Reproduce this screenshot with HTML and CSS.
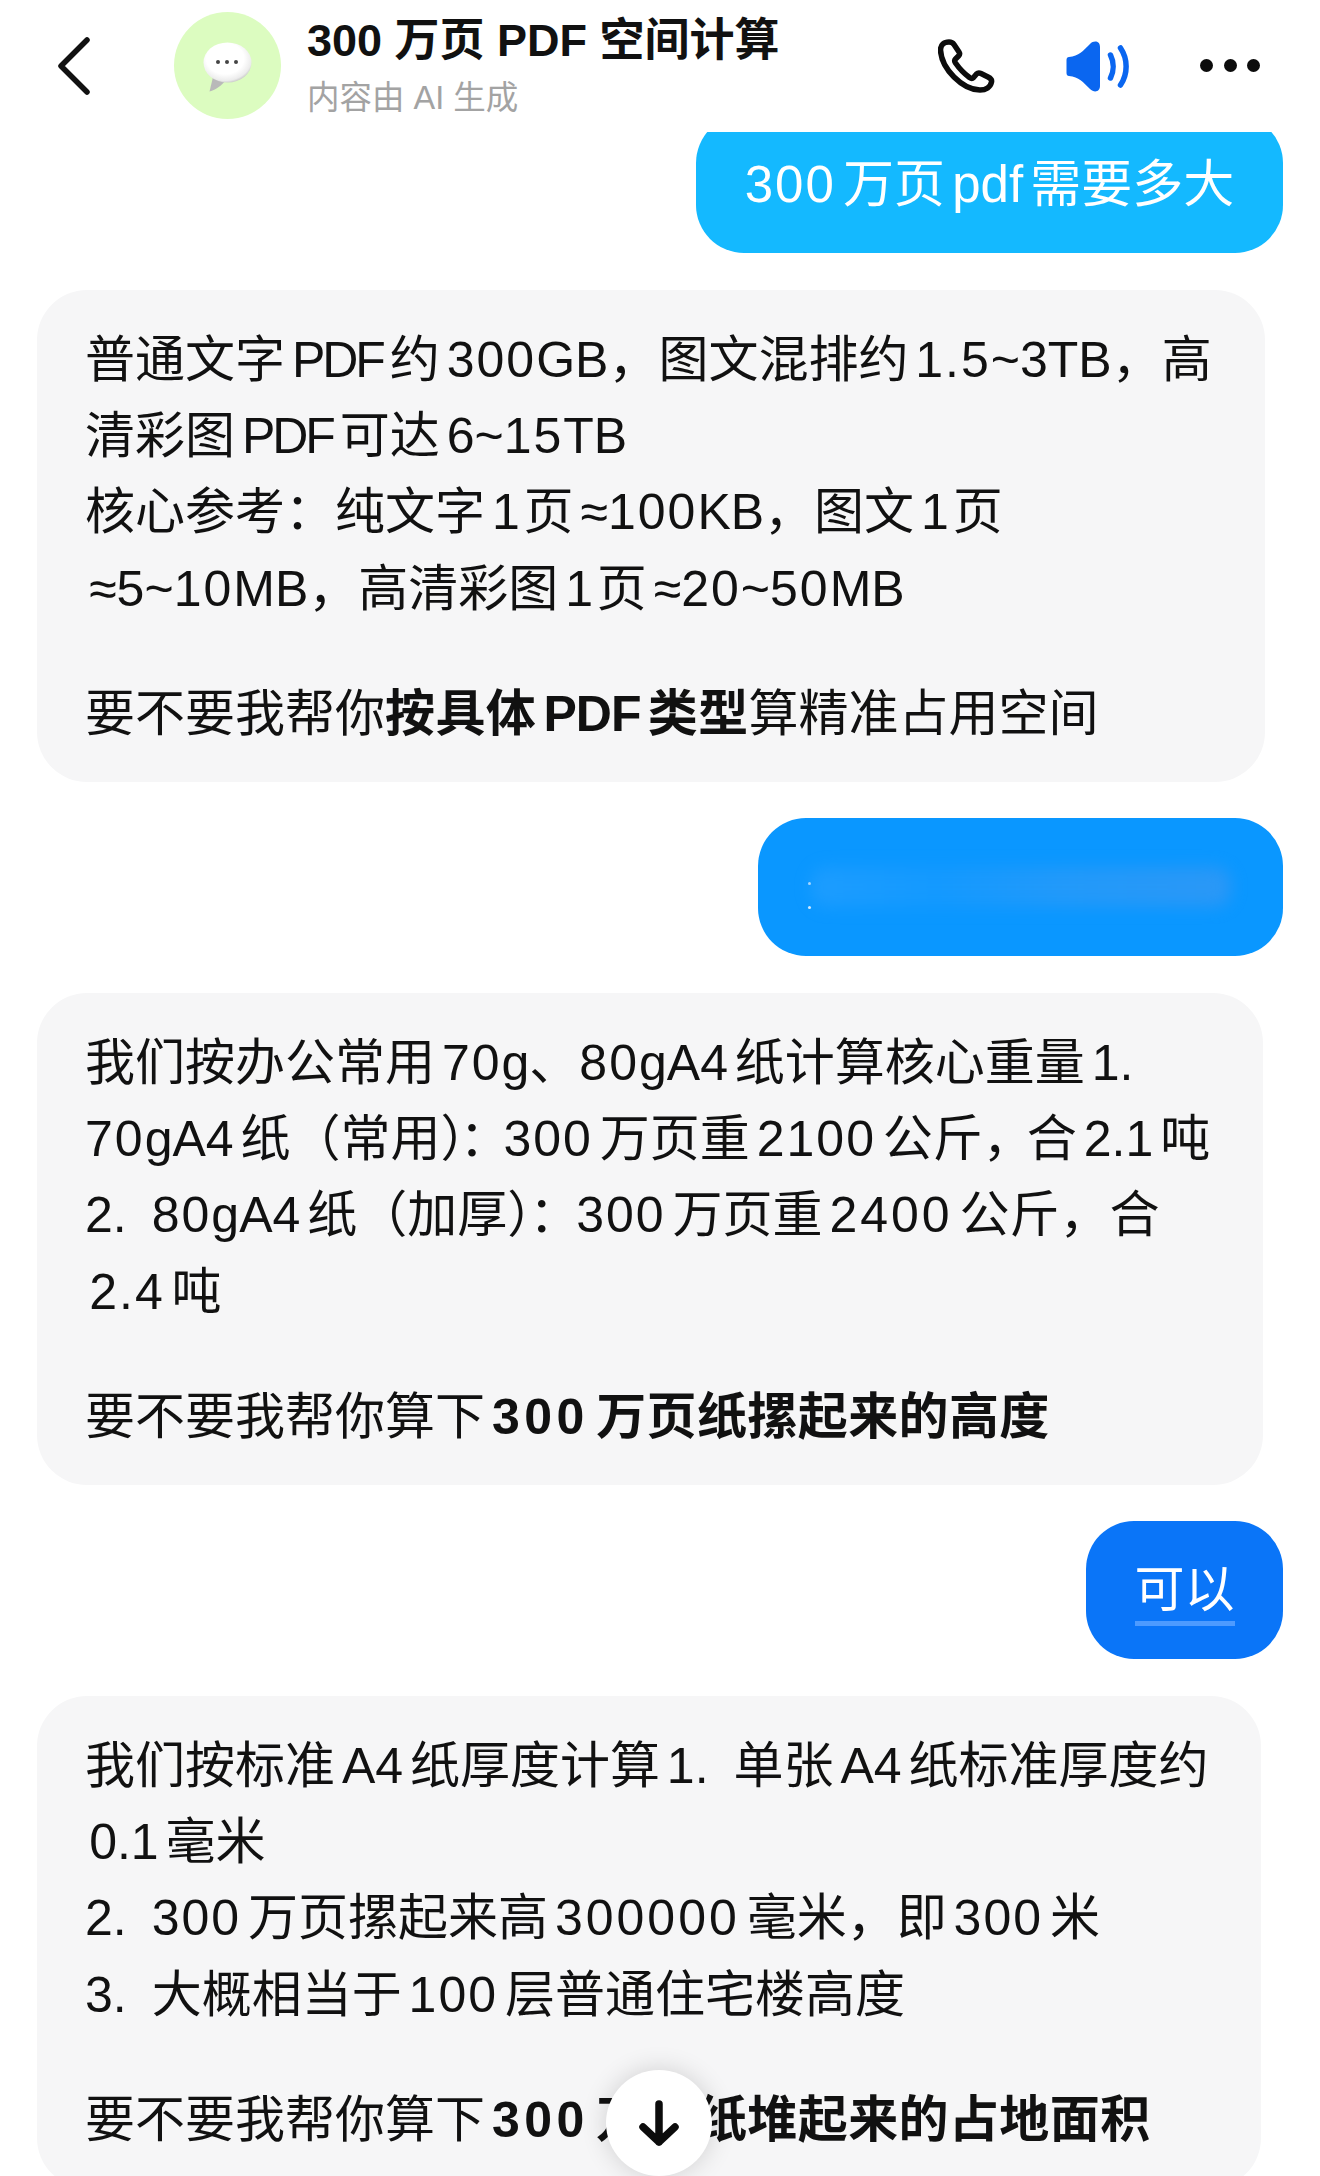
FILE: index.html
```html
<!DOCTYPE html>
<html lang="zh-CN">
<head>
<meta charset="utf-8">
<title>300 万页 PDF 空间计算</title>
<link rel="stylesheet" href="styles.css">
</head>
<body>
<div class="screen">
  <header class="topbar">
    <svg class="back" viewBox="0 0 33 58" aria-hidden="true"><path d="M30 3 4 29l26 26"/></svg>
    <div class="avatar">
      <svg class="balloon" viewBox="0 0 70 65" aria-hidden="true">
        <defs>
          <radialGradient id="bg" cx="0.45" cy="0.4" r="0.65">
            <stop offset="0.6" stop-color="#ffffff"/>
            <stop offset="0.85" stop-color="#ececec"/>
            <stop offset="1" stop-color="#b4b4b4"/>
          </radialGradient>
        </defs>
        <path fill="#b9b9b9" d="M20 44 16.500 58.500C23 57 29 52 33 47Z"/>
        <ellipse cx="34.500" cy="29.500" rx="24" ry="20" fill="url(#bg)"/>
        <circle cx="25" cy="29" r="2" fill="#444"/><circle cx="34" cy="29" r="2" fill="#444"/><circle cx="43" cy="29" r="2" fill="#444"/>
      </svg>
    </div>
    <div class="titles">
      <div class="title">300 万页 PDF 空间计算</div>
      <div class="subtitle">内容由 AI 生成</div>
    </div>
    <div class="actions">
      <svg class="phone" viewBox="0 0 57 57" aria-hidden="true"><path d="M11 4C6 4 2.500 7 2.500 12 3 22 8 31 16 39c8 8 17 13 26 13 6 0 10.500-3 11.500-8 .5-2-1.500-4-3.500-5l-7-3.500c-2-1-3.500-.5-4.500.5l-3 3.500c-1 1-2.500 1-4 0C26 35.500 21 30 17.500 25c-1-1.500-1-3 0-4l3-3c1-1 1.500-2.500.5-4L16 6.500C15 5 13 4 11 4Z"/></svg>
      <svg class="speaker" viewBox="0 0 80 70" aria-hidden="true">
        <path class="cone" d="M14 27c10-1 14-6 21-13 4-4 10-3 10 3v39c0 6-6 7-10 3-7-7-11-12-21-13-1.500 0-2.500-1-2.500-3V30c0-2 1-3 2.500-3Z"/>
        <path class="wave" d="M55.500 25c3.500 7 3.500 16 0 23"/>
        <path class="wave" d="M65.500 18c7.500 11 7.500 26 0 37"/>
      </svg>
      <div class="more"><i></i><i></i><i></i></div>
    </div>
  </header>

  <main class="chat">
    <div class="msg user first"><span class="lift"><span class="d">300</span> 万页 pdf 需要多大</span></div>

    <div class="msg ai">
      <p>普通文字 <span class="u">PDF</span> 约 <span class="d">300</span>GB，图文混排约 <span class="d">1.5</span>~3TB，高<br>清彩图 <span class="u">PDF</span> 可达 6~<span class="d">15</span>TB<br>核心参考：纯文字 <span class="u">1</span> 页 ≈<span class="d">100</span>KB，图文 <span class="u">1</span> 页<br>&hairsp;≈5~<span class="d">10</span>MB，高清彩图 <span class="u">1</span> 页 ≈<span class="d">20</span>~<span class="d">50</span>MB</p>
      <p>要不要我帮你<b>按具体 <span class="u">PDF</span> 类型</b>算精准占用空间</p>
    </div>

    <div class="msg user second" aria-label="已模糊处理的消息"><span class="smear"></span></div>

    <div class="msg ai">
      <p>我们按办公常用 <span class="d">70</span>g、<span class="d">80</span>gA4 纸计算核心重量 1.<br><span class="d">70</span>gA4 纸（常用<span class="k">）：</span><span class="d">300</span> 万页重 <span class="d">2100</span> 公斤<span class="k">，</span>合 2.1 吨<br>2.&ensp;<span class="d">80</span>gA4 纸（加厚<span class="j">）：</span><span class="d">300</span> 万页重 <span class="w">2400</span> 公斤，合<br>&hairsp;<span class="d">2.4</span> 吨</p>
      <p>要不要我帮你算下 <b><span class="d">300</span> 万页纸摞起来的高度</b></p>
    </div>

    <div class="msg user third"><span class="mark">可以</span></div>

    <div class="msg ai">
      <p>我们按标准 A4 纸厚度计算 1.&ensp;单张 A4 纸标准厚度约<br>&hairsp;0.1 毫米<br>2.&ensp;<span class="d">300</span> 万页摞起来高 <span class="w">300000</span> 毫米，即 <span class="d">300</span> 米<br>3.&ensp;大概相当于 <span class="d">100</span> 层普通住宅楼高度</p>
      <p>要不要我帮你算下 <b><span class="d">300</span> 万页纸堆起来的占地面积</b></p>
    </div>
  </main>

  <button class="jump" aria-label="回到底部">
    <svg viewBox="0 0 40 48" aria-hidden="true"><path d="M20 4v38M4 27l16 15 16-15"/></svg>
  </button>
</div>
</body>
</html>
```

FILE: styles.css
```css
* { box-sizing: border-box; }

html, body {
  margin: 0;
  height: 2176px;
  overflow: hidden;
  background: #fff;
}

.screen {
  position: relative;
  height: 2176px;
  overflow: hidden;
  font-family: "Liberation Sans", "Noto Sans CJK SC", sans-serif;
  color: #111;
}

/* top bar */
.topbar {
  position: relative;
  z-index: 2;
  height: 132px;
  display: flex;
  align-items: flex-start;
  padding-left: 57px;
  background: #fff;
}

.back {
  width: 33px;
  height: 58px;
  margin-top: 37px;
  fill: none;
  stroke: #111;
  stroke-width: 5.500;
  stroke-linecap: round;
  stroke-linejoin: round;
}

.avatar {
  width: 107px;
  height: 107px;
  margin: 12px 0 0 84px;
  border-radius: 50%;
  background: #dcfcc0;
  display: flex;
  align-items: center;
  justify-content: center;
}

.balloon { width: 70px; height: 65px; }

.titles { margin: 14px 0 0 26px; }

.title {
  font-size: 45px;
  line-height: 54px;
  font-weight: 700;
  white-space: pre;
}

.subtitle {
  margin-top: 10px;
  font-size: 32.500px;
  line-height: 40px;
  color: #a3a3a3;
  white-space: pre;
}

.actions {
  margin-left: auto;
  padding: 30px 60px 0 0;
  display: flex;
  align-items: flex-start;
}

.phone {
  width: 57px;
  height: 57px;
  margin-top: 8px;
  fill: none;
  stroke: #0c0c0c;
  stroke-width: 5.500;
  stroke-linejoin: round;
}

.speaker { width: 80px; height: 70px; margin-left: 60px; }
.speaker .cone { fill: #0a66f0; }
.speaker .wave {
  fill: none;
  stroke: #0a66f0;
  stroke-width: 5.500;
  stroke-linecap: round;
}

.more {
  width: 60px;
  margin: 29px 0 0 65px;
  display: flex;
  justify-content: space-between;
}

.more i {
  width: 13px;
  height: 13px;
  border-radius: 50%;
  background: #0c0c0c;
}

/* conversation */
.chat {
  display: flex;
  flex-direction: column;
  gap: 36.500px;
  padding: 0 37px 0 37px;
}

.msg {
  font-size: 50px;
  word-spacing: -7px;
}

.d { letter-spacing: 2px; }
.w { letter-spacing: 3px; }
.u { letter-spacing: -3px; }
.k { letter-spacing: -6px; }
.j { letter-spacing: -3px; }
b .d { letter-spacing: 4.500px; }
b .u { letter-spacing: -1px; }

.ai {
  align-self: flex-start;
  padding: 32px 53px 29px 48px;
  border-radius: 50px;
  background: #f6f6f7;
  line-height: 76.400px;
}

.ai p { margin: 0; white-space: pre; }
.ai p + p { margin-top: 49px; }
.ai b { font-weight: 700; letter-spacing: .4px; }

.user {
  position: relative;
  align-self: flex-end;
  display: flex;
  align-items: center;
  justify-content: center;
  border-radius: 48px;
  color: #fff;
  white-space: pre;
}

.first {
  width: 587px;
  height: 138px;
  margin-top: -17px;
  background: #14b9ff;
  font-size: 51px;
}

.lift { margin-bottom: 8px; }

.second {
  width: 525px;
  height: 138px;
  background: #0a97ff;
}

.second::before {
  content: "";
  position: absolute;
  left: 50px;
  top: 64px;
  width: 3px;
  height: 3px;
  border-radius: 50%;
  background: #bfe2ff;
  box-shadow: 0 24px 0 #d8eeff;
}

.smear {
  width: 420px;
  height: 40px;
  border-radius: 16px;
  background: linear-gradient(90deg, #2fa2ff 0%, #1e9cff 30%, #3a9cf5 60%, #4b98ee 100%);
  opacity: .5;
  filter: blur(8px);
}

.third {
  width: 197px;
  height: 138px;
  background: #0a75f8;
}

.mark {
  margin-top: 4px;
  padding-bottom: 0;
  line-height: 62px;
  border-bottom: 5px solid #4d9bff;
}

/* scroll button */
.jump {
  position: absolute;
  left: 606px;
  top: 2070px;
  width: 106px;
  height: 106px;
  padding: 0;
  border: 0;
  border-radius: 50%;
  background: #fff;
  box-shadow: 0 0 26px rgba(0, 0, 0, .16);
  display: flex;
  justify-content: center;
}

.jump svg {
  width: 40px;
  height: 48px;
  margin-top: 30px;
  fill: none;
  stroke: #0c0c0c;
  stroke-width: 7.500;
  stroke-linecap: round;
  stroke-linejoin: round;
}
```
